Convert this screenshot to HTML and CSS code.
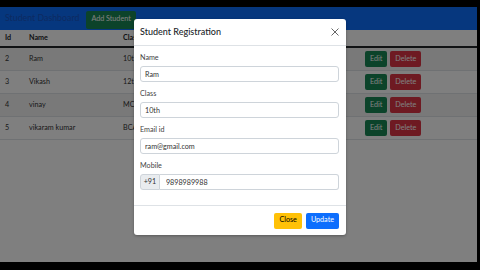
FILE: index.html
```html
<!doctype html>
<html lang="en">
<head>
	<meta charset="UTF-8">
	<title>Student Dashboard</title>
	<link rel="stylesheet" href="styles.css">
</head>
<body>
	<div class="screen">
		<nav class="navbar">
			<span class="brand">Student Dashboard</span>
			<a href="javascript:;" class="btn btn-green">Add Student</a>
		</nav>
		<table class="list">
			<colgroup>
				<col class="c-id"><col class="c-name"><col class="c-class"><col class="c-act">
			</colgroup>
			<thead>
				<tr><th>Id</th><th>Name</th><th>Class</th><th></th></tr>
			</thead>
			<tbody>
				<tr><td>2</td><td>Ram</td><td>10th</td><td><a href="javascript:;" class="btn btn-green">Edit</a><a href="javascript:;" class="btn btn-red">Delete</a></td></tr>
				<tr><td>3</td><td>Vikash</td><td>12th</td><td><a href="javascript:;" class="btn btn-green">Edit</a><a href="javascript:;" class="btn btn-red">Delete</a></td></tr>
				<tr><td>4</td><td>vinay</td><td>MCA</td><td><a href="javascript:;" class="btn btn-green">Edit</a><a href="javascript:;" class="btn btn-red">Delete</a></td></tr>
				<tr><td>5</td><td>vikaram kumar</td><td>BCA</td><td><a href="javascript:;" class="btn btn-green">Edit</a><a href="javascript:;" class="btn btn-red">Delete</a></td></tr>
			</tbody>
		</table>
		<div class="backdrop"></div>
		<div class="modal">
			<div class="modal-head">
				<span class="modal-title">Student Registration</span>
				<a href="javascript:;" class="close">
					<svg width="8" height="8" viewBox="0 0 8 8"><path d="M0.5 0.5L7.5 7.5M7.5 0.5L0.5 7.5" stroke="#555" stroke-width="0.9" fill="none"/></svg>
				</a>
			</div>
			<div class="modal-body">
				<div class="group">
					<label>Name</label>
					<input type="text" class="field" value="Ram">
				</div>
				<div class="group">
					<label>Class</label>
					<input type="text" class="field" value="10th">
				</div>
				<div class="group">
					<label>Email id</label>
					<input type="text" class="field" value="ram@gmail.com">
				</div>
				<div class="group">
					<label>Mobile</label>
					<div class="input-group">
						<span class="addon">+91</span>
						<input type="text" class="field" value="9898989988">
					</div>
				</div>
			</div>
			<div class="modal-foot">
				<a href="javascript:;" class="btn btn-yellow">Close</a>
				<a href="javascript:;" class="btn btn-blue">Update</a>
			</div>
		</div>
	</div>
</body>
</html>
```
FILE: styles.css
```css
body,div,table,input,label{
	margin:0;
	padding:0;
}
body{
	background:#000;
	font:400 7.2px/1.4 Lato,sans-serif;
	color:#212529;
}
a{
	text-decoration:none;
}
.screen{
	width:477px;
	height:255px;
	margin-top:7px;
	background:#fff;
	position:relative;
	overflow:hidden;
}
.navbar{
	height:23px;
	background:#0d6efd;
	display:flex;
	align-items:center;
	padding-left:5px;
}
.brand{
	font-size:8.8px;
	color:#1a55c4;
	margin-right:7px;
}
.btn{
	display:inline-flex;
	align-items:center;
	justify-content:center;
	height:16px;
	padding:0 5px;
	border-radius:2px;
	color:#fff;
	font-size:7.2px;
}
.navbar .btn{
	height:18px;
	margin-top:2px;
}
.btn-green{background:#198754;}
.btn-red{background:#dc3545;}
.btn-yellow{background:#ffc107;color:#000;}
.btn-blue{background:#0d6efd;}

.list{
	width:100%;
	border-collapse:collapse;
	table-layout:fixed;
}
.c-id{width:24px;}
.c-name{width:94px;}
.c-class{width:242px;}
.list th,.list td{
	text-align:left;
	padding:0 0 0 5px;
	white-space:nowrap;
	overflow:hidden;
}
.list th{
	height:16px;
	font-weight:700;
	border-bottom:2px solid #212529;
}
.list td{
	height:22px;
	border-bottom:1px solid #dee2e6;
	color:#333;
}
.list tbody tr:nth-child(odd) td{
	background:#f2f2f2;
}
.list td .btn{
	margin-right:3px;
}

.backdrop{
	position:absolute;
	inset:0;
	background:rgba(0,0,0,.5);
}
.modal{
	position:absolute;
	left:134px;
	top:12px;
	width:212px;
	height:216px;
	background:#fff;
	border-radius:3px;
	display:flex;
	flex-direction:column;
	box-shadow:0 1px 3px rgba(0,0,0,.3);
}
.modal-head{
	height:26px;
	display:flex;
	align-items:center;
	justify-content:space-between;
	padding:0 7px 0 6px;
	border-bottom:1px solid #dee2e6;
}
.modal-title{
	font-size:9px;
	font-weight:500;
	color:#212529;
}
.close{
	display:flex;
}
.modal-body{
	flex:1;
	padding:7px 7px 0 6px;
}
.group{
	margin-bottom:7px;
}
.group label{
	display:block;
	height:10px;
	line-height:10px;
	margin-bottom:3px;
	color:#444;
}
.field{
	display:block;
	width:100%;
	height:16px;
	box-sizing:border-box;
	border:1px solid #ced4da;
	border-radius:3px;
	padding:0 4px;
	font:400 7.2px Lato,sans-serif;
	color:#333;
}
.input-group{
	display:flex;
}
.addon{
	width:22px;
	height:16px;
	box-sizing:border-box;
	display:flex;
	align-items:center;
	justify-content:center;
	background:#e9ecef;
	border:1px solid #ced4da;
	border-radius:3px 0 0 3px;
	color:#333;
}
.input-group .field{
	border-left:0;
	border-radius:0 3px 3px 0;
	padding-left:6px;
}
.modal-foot{
	height:30px;
	box-sizing:border-box;
	border-top:1px solid #dee2e6;
	display:flex;
	align-items:center;
	justify-content:flex-end;
	gap:4px;
	padding:0 7px;
}
```
